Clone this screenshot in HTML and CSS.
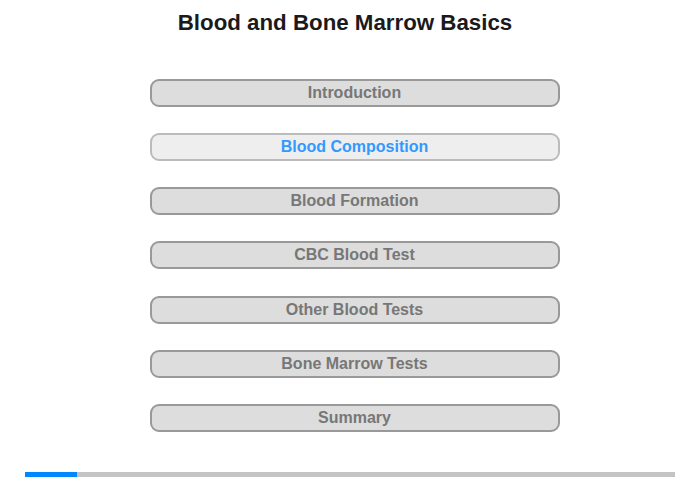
FILE: index.html
```html
<!DOCTYPE html>
<html>
<head>
<meta charset="utf-8">
<link rel="stylesheet" href="styles.css">
</head>
<body>
<div class="page">
  <h1 class="title">Blood and Bone Marrow Basics</h1>
  <nav class="menu">
    <div class="item">Introduction</div>
    <div class="item active">Blood Composition</div>
    <div class="item">Blood Formation</div>
    <div class="item">CBC Blood Test</div>
    <div class="item">Other Blood Tests</div>
    <div class="item">Bone Marrow Tests</div>
    <div class="item">Summary</div>
  </nav>
  <div class="progress"><div class="progress-fill" style="width:52px"></div></div>
</div>
</body>
</html>
```
FILE: styles.css
```css
html, body {
  margin: 0;
  padding: 0;
  background: #fff;
}
.page {
  width: 700px;
  height: 480px;
  display: flex;
  flex-direction: column;
  font-family: "Liberation Sans", Arial, sans-serif;
}
.title {
  margin: 10px 0 0 0;
  padding-right: 10px;
  font-size: 22.3px;
  line-height: 25px;
  font-weight: bold;
  color: #1a1a1a;
  text-align: center;
}
.menu {
  margin-top: 44px;
  padding-left: 9px;
  display: flex;
  flex-direction: column;
  align-items: center;
  gap: 26.17px;
}
.item {
  box-sizing: border-box;
  width: 410px;
  height: 28px;
  border: 2px solid #999;
  border-radius: 9px;
  background: #ddd;
  color: #777;
  font-size: 16px;
  font-weight: bold;
  line-height: 24px;
  text-align: center;
}
.item.active {
  background: #eee;
  border-color: #bbb;
  color: #3399ff;
}
.progress {
  margin: 40px 0 0 25px;
  width: 650px;
  height: 5px;
  background: #c4c4c4;
}
.progress-fill {
  height: 100%;
  background: #0088ff;
}
```
